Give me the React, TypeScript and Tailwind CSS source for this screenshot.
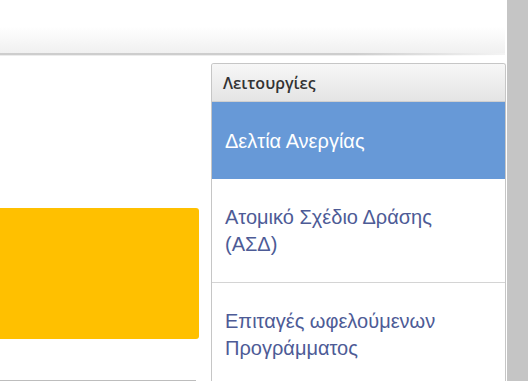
import React from 'react';

const items = [
  { label: 'Δελτία Ανεργίας', active: true },
  { label: 'Ατομικό Σχέδιο Δράσης (ΑΣΔ)', active: false },
  { label: 'Επιταγές ωφελούμενων Προγράμματος', active: false },
];

export default function App() {
  return (
    <div className="flex h-[381px] w-[528px] overflow-hidden bg-white font-['Liberation_Sans',Arial,sans-serif]">
      <div className="flex min-w-0 flex-1 flex-col">
        {/* top header strip */}
        <div className="h-[53px] shrink-0 bg-gradient-to-b from-white from-50% to-[#f0f0f0]" />
        <div className="h-[2px] shrink-0 bg-gradient-to-r from-[#cdcdcd] from-70% to-[#f4f4f4]" />
        <div className="h-px shrink-0 bg-gradient-to-r from-[#ececec] from-70% to-white" />

        <div className="flex min-h-0 flex-1 gap-[12px] pt-[7px]">
          {/* left content */}
          <div className="flex w-[199px] shrink-0 flex-col">
            <div className="h-[145px] shrink-0" />
            <div className="h-[131px] shrink-0 rounded-r-[3px] bg-[#ffc000]" />
            <div className="flex-1" />
            <div className="mr-[3px] h-px shrink-0 bg-[#bdbdbd]" />
          </div>

          {/* functions panel */}
          <div className="flex w-[295px] shrink-0 flex-col overflow-hidden rounded-t-[3px] border border-b-0 border-[#c6c6c6]">
            <div className="flex h-[38px] shrink-0 items-center border-b border-[#cfcfcf] bg-gradient-to-b from-[#f7f7f7] to-[#e4e4e4] px-[11px] font-['Open_Sans',sans-serif] text-[16px] font-semibold text-[#333]">
              Λειτουργίες
            </div>
            {items.map((it, i) => (
              <div
                key={i}
                className={
                  it.active
                    ? 'flex h-[77px] shrink-0 items-center bg-[#6799d7] px-[13px] text-[20px] text-white'
                    : 'flex h-[104px] shrink-0 items-center border-b border-[#d4d4d4] px-[13px] text-[20px] leading-[27px] text-[#4d5b96]'
                }
              >
                <span className={it.active ? '' : 'max-w-[240px]'}>{it.label}</span>
              </div>
            ))}
          </div>
        </div>
      </div>
      <div className="ml-[2px] w-[21px] shrink-0 bg-[#c5c5c5]" />
    </div>
  );
}
